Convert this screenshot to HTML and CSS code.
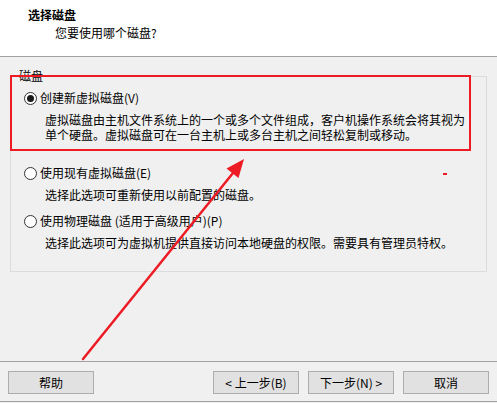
FILE: index.html
```html
<!DOCTYPE html>
<html lang="zh-CN">
<head>
<meta charset="utf-8">
<title>选择磁盘</title>
<link rel="stylesheet" href="styles.css">
</head>
<body>
<div class="dialog">
  <header class="header">
    <div class="title">选择磁盘</div>
    <div class="subtitle">您要使用哪个磁盘?</div>
  </header>
  <main class="main">
    <fieldset class="group">
      <legend class="legend">磁盘</legend>
      <div class="options">
        <div class="option">
          <div class="radio-row"><span class="radio checked"></span><span class="label">创建新虚拟磁盘(V)</span></div>
          <div class="desc">虚拟磁盘由主机文件系统上的一个或多个文件组成，客户机操作系统会将其视为<br>单个硬盘。虚拟磁盘可在一台主机上或多台主机之间轻松复制或移动。</div>
        </div>
        <div class="option option-2">
          <div class="radio-row"><span class="radio"></span><span class="label">使用现有虚拟磁盘(E)</span></div>
          <div class="desc">选择此选项可重新使用以前配置的磁盘。</div>
        </div>
        <div class="option option-3">
          <div class="radio-row"><span class="radio"></span><span class="label">使用物理磁盘 (适用于高级用户)(P)</span></div>
          <div class="desc">选择此选项可为虚拟机提供直接访问本地硬盘的权限。需要具有管理员特权。</div>
        </div>
      </div>
    </fieldset>
  </main>
  <footer class="footer">
    <button class="btn">帮助</button>
    <span class="spacer"></span>
    <button class="btn">&lt; 上一步(B)</button>
    <button class="btn">下一步(N) &gt;</button>
    <button class="btn">取消</button>
  </footer>
  <div class="mark-box"></div>
  <div class="mark-dash"></div>
  <svg class="mark-arrow" width="497" height="403" viewBox="0 0 497 403">
    <line x1="83" y1="359" x2="233" y2="173" stroke="#ed1c24" stroke-width="2.5" stroke-linecap="round"/>
    <polygon points="244,159 226.5,168.5 231.5,172.5 238.5,178" fill="#ed1c24"/>
  </svg>
</div>
</body>
</html>
```
FILE: styles.css
```css
html, body {
  margin: 0;
  padding: 0;
  background: #f0f0f0;
}
body {
  font-family: "Noto Sans CJK SC", "Microsoft YaHei", sans-serif;
  font-size: 12px;
  color: #000;
}
.dialog {
  position: relative;
  width: 497px;
  height: 403px;
  overflow: hidden;
  display: flex;
  flex-direction: column;
  background: #f0f0f0;
}
.header {
  height: 56px;
  box-sizing: border-box;
  background: #fff;
  border-bottom: 1px solid #a0a0a0;
  padding-top: 7px;
  flex: none;
  height: 57px;
}
.title {
  font-weight: bold;
  line-height: 16px;
  padding-left: 28px;
}
.subtitle {
  line-height: 16px;
  padding-left: 55px;
  margin-top: 2px;
}
.main {
  height: 304px;
  flex: none;
  box-sizing: border-box;
  padding-top: 11px;
}
.group {
  margin: 0 10px;
  padding: 0;
  border: 1px solid #dcdcdc;
  min-width: 0;
  height: 204px;
  box-sizing: border-box;
}
.legend {
  margin-left: 7px;
  padding: 0 1px;
  line-height: 16px;
}
.options {
  padding: 6px 0 0 13px;
}
.radio-row {
  display: flex;
  align-items: center;
  height: 16px;
}
.radio {
  width: 13px;
  height: 13px;
  box-sizing: border-box;
  border: 1px solid #333;
  border-radius: 50%;
  background: #fff;
  margin-right: 3px;
  display: flex;
  align-items: center;
  justify-content: center;
  flex: none;
}
.radio.checked::after {
  content: "";
  width: 7px;
  height: 7px;
  border-radius: 50%;
  background: #1a1a1a;
}
.label {
  line-height: 16px;
}
.desc {
  margin: 6px 0 0 21px;
  line-height: 15px;
  white-space: nowrap;
}
.option-2 {
  margin-top: 23px;
}
.option-2 .desc {
  margin-top: 6px;
}
.option-3 {
  margin-top: 11px;
}
.footer {
  flex: none;
  display: flex;
  align-items: flex-start;
  gap: 9px;
  border-top: 1px solid #a0a0a0;
  border-bottom: 1px solid #a0a0a0;
  padding: 9px 8px 0 8px;
  height: 41px;
  box-sizing: border-box;
}
.spacer {
  flex: 1;
}
.btn {
  width: 86px;
  height: 23px;
  box-sizing: border-box;
  border: 1px solid #adadad;
  background: #e1e1e1;
  font-family: "Noto Sans CJK SC", "Microsoft YaHei", sans-serif;
  font-size: 12px;
  color: #000;
  padding: 0;
  line-height: 20px;
}
.mark-box {
  position: absolute;
  left: 10px;
  top: 75px;
  width: 461px;
  height: 76px;
  box-sizing: border-box;
  border: 2px solid #ed1c24;
  pointer-events: none;
}
.mark-dash {
  position: absolute;
  left: 443px;
  top: 173px;
  width: 4px;
  height: 2px;
  background: #ed1c24;
}
.mark-arrow {
  position: absolute;
  left: 0;
  top: 0;
  pointer-events: none;
}
```
